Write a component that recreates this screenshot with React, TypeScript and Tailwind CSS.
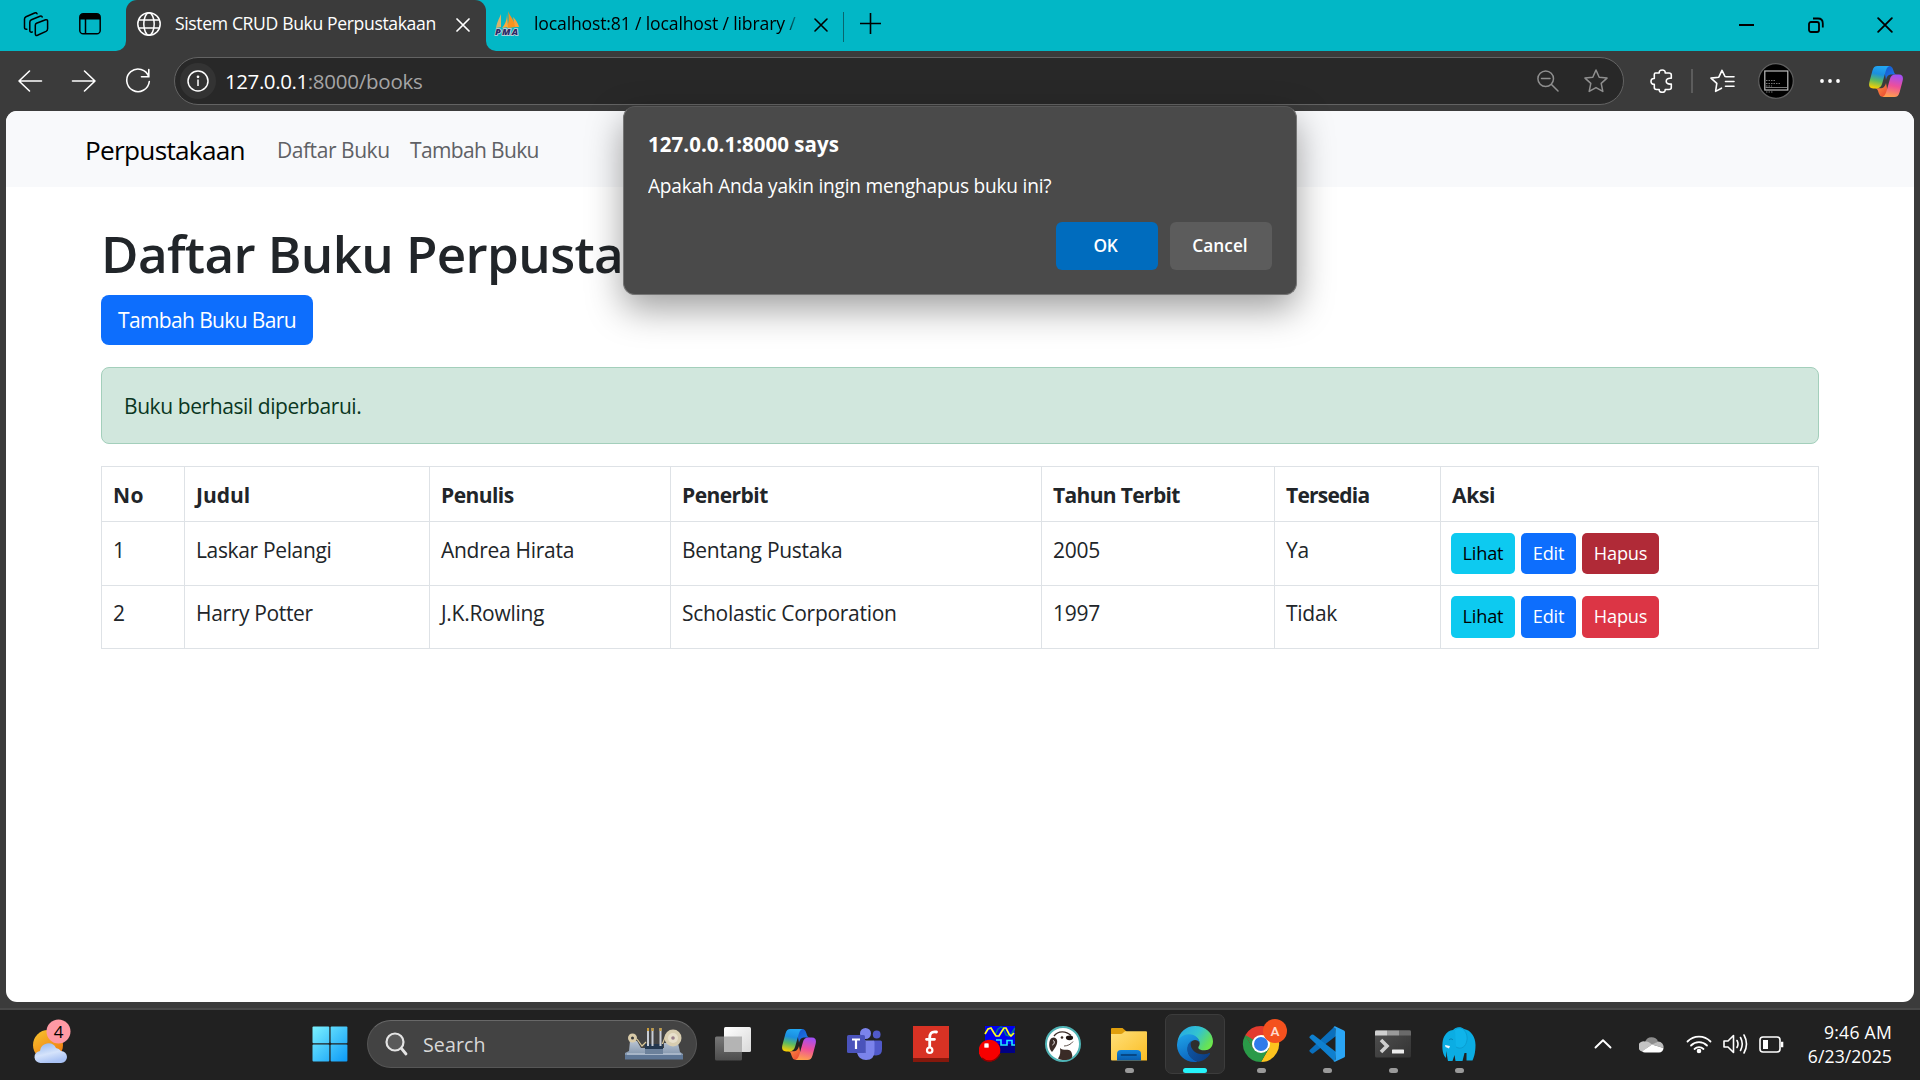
import { useId } from "react";
import type { ReactNode } from "react";

const books = [
  { no: 1, judul: "Laskar Pelangi", penulis: "Andrea Hirata", penerbit: "Bentang Pustaka", tahun: 2005, tersedia: "Ya", active: true },
  { no: 2, judul: "Harry Potter", penulis: "J.K.Rowling", penerbit: "Scholastic Corporation", tahun: 1997, tersedia: "Tidak", active: false },
];

function Cross({ size, stroke, width }: { size: number; stroke: string; width: number }) {
  return (
    <svg width={size} height={size} viewBox="0 0 14 14" fill="none" stroke={stroke} strokeWidth={width} strokeLinecap="round">
      <path d="M1 1 13 13M13 1 1 13" />
    </svg>
  );
}

function Globe() {
  return (
    <svg width="24" height="24" viewBox="0 0 24 24" fill="none" stroke="#fff" strokeWidth="1.5">
      <circle cx="12" cy="12" r="11.2" />
      <ellipse cx="12" cy="12" rx="5.2" ry="11.2" />
      <path d="M2 8h20M2 16h20" />
    </svg>
  );
}

function PhpMyAdmin() {
  return (
    <svg className="overflow-visible" width="26" height="26" viewBox="0 0 26 26">
      <path d="M7 3 7 16 2 17C3 11 5 8 7 3Z" fill="#d9b26a" />
      <path d="M14 0C16 5 20 9 22 16L13 17C15 11 15 6 14 0Z" fill="#f7931e" />
      <path d="M13 2C13 8 12 12 8 17L14 16Z" fill="#fba93c" />
      <path d="M19 6C22 9 24 12 25 16L21 16Z" fill="#f9a23a" />
      <text x="1" y="24.2" fontSize="9.3" fontWeight="800" fontStyle="italic" fontFamily="Open Sans, sans-serif" fill="#2c2a66" stroke="#cfd3dd" strokeWidth="1.6" paintOrder="stroke" textLength="23">PMA</text>
    </svg>
  );
}

function Star() {
  return (
    <svg width="24" height="24" viewBox="0 0 24 24" fill="none" stroke="#8f8f8f" strokeWidth="1.5" strokeLinejoin="round">
      <path d="M12 1 15.2 8.2 23 9.1 17.2 14.4 18.8 22.4 12 18.6 5.2 22.4 6.8 14.4 1 9.1 8.8 8.2Z" />
    </svg>
  );
}

function Copilot({ width, height }: { width: number; height: number }) {
  const id = useId().replace(/[^a-zA-Z0-9]/g, "");
  return (
    <svg width={width} height={height} viewBox="0 0 100 91">
      <defs>
        <linearGradient id={id + "a"} x1="0.5" y1="0" x2="0.3" y2="1">
          <stop offset="0" stopColor="#22a6f2" />
          <stop offset="0.35" stopColor="#1b8fe0" />
          <stop offset="0.65" stopColor="#5cba62" />
          <stop offset="1" stopColor="#fbd000" />
        </linearGradient>
        <linearGradient id={id + "b"} x1="0.6" y1="0" x2="0.4" y2="1">
          <stop offset="0" stopColor="#a24ff5" />
          <stop offset="0.5" stopColor="#ee4f9b" />
          <stop offset="1" stopColor="#ffa04d" />
        </linearGradient>
        <linearGradient id={id + "c"} x1="0" y1="0" x2="1" y2="1">
          <stop offset="0" stopColor="#1555c8" />
          <stop offset="1" stopColor="#1f7df0" />
        </linearGradient>
        <linearGradient id={id + "d"} x1="0" y1="0" x2="1" y2="1">
          <stop offset="0" stopColor="#ff9a45" />
          <stop offset="1" stopColor="#e8402f" />
        </linearGradient>
      </defs>
      <path d="M42 0H58C67 0 69 5 72 13 74 21 76 24 82 25H64C56 25 52 32 50 40Z" fill={`url(#${id}c)`} />
      <path d="M58 91H42C33 91 31 86 28 78 26 69 24 66 18 65H36C44 65 48 58 50 50Z" fill={`url(#${id}d)`} />
      <path d="M25 0H60C53 3 51 9 48 19L39 51C36 61 32 66 22 66H12C0 66-1 57 1 48L10 14C13 4 17 0 25 0Z" fill={`url(#${id}a)`} />
      <path d="M75 91H40C47 88 49 82 52 72L61 40C64 30 68 25 78 25H88C100 25 101 34 99 43L90 77C87 87 83 91 75 91Z" fill={`url(#${id}b)`} />
    </svg>
  );
}

function TabStrip() {
  return (
    <div className="flex h-[51px] bg-[#3b3b3b]">
      <div className="flex w-[126px] items-start gap-[30px] rounded-br-[10px] bg-[#02b7c6] pt-3 pl-[23px]">
        <svg width="26" height="25" viewBox="0 0 26 25" fill="none" stroke="#000" strokeWidth="1.5" strokeLinejoin="round" strokeLinecap="round">
          <path d="M13.5 11.2 22.6 7.8Q24.6 7.3 24.6 9.3V16.8Q24.6 18.6 23 19.4L14.5 23.2Q12.3 24 12.3 21.8V13.2Q12.3 11.7 13.5 11.2Z" />
          <path d="M9.3 20Q6.8 20.6 6.8 18.5V10.2Q6.8 8.5 8.4 7.8L17 4.2Q18.8 3.6 19.2 5" />
          <path d="M3.8 17.2Q1.5 17.6 1.5 15.5V7Q1.5 5.4 3 4.7L11.6 1Q13.4.4 14 1.8" />
        </svg>
        <svg className="mt-px" width="22" height="22" viewBox="0 0 22 22">
          <rect x="0.8" y="0.8" width="20.4" height="20" rx="3.4" fill="none" stroke="#000" strokeWidth="1.5" />
          <path d="M1 6.5V4Q1 1 4 1H18Q21 1 21 4V6.500Z" fill="#000" />
          <path d="M6.500 6V20" stroke="#000" strokeWidth="1.5" />
        </svg>
      </div>
      <div className="w-[360px] bg-[linear-gradient(#02b7c6_50%,#3b3b3b_50%)]">
        <div className="flex h-full items-start rounded-t-[11px] bg-[#3b3b3b] pl-[11px]">
          <div className="mt-3 w-6"><Globe /></div>
          <span className="ml-[14px] w-[270px] pt-[11px] text-[17.6px] leading-[25px] tracking-[-0.37px] whitespace-nowrap text-white">Sistem CRUD Buku Perpustakaan</span>
          <div className="mt-[18px] ml-[11px]"><Cross size={14} stroke="#fff" width={1.7} /></div>
        </div>
      </div>
      <div className="flex flex-1 items-start rounded-bl-[10px] bg-[#02b7c6] pl-[8px]">
        <div className="mt-[11px] w-[26px]"><PhpMyAdmin /></div>
        <span className="ml-[14px] w-[270px] overflow-hidden mask-[linear-gradient(to_right,black_250px,transparent_268px)] pt-[11px] text-[17.6px] leading-[25px] tracking-[-0.15px] whitespace-nowrap text-black">localhost:81 / localhost / library /</span>
        <div className="mt-[18px] ml-[10px]"><Cross size={14} stroke="#000" width={1.6} /></div>
        <div className="mt-[12px] ml-[15px] h-[30px] w-px bg-[#08666e]" />
        <svg className="mt-[13px] ml-[16px]" width="21" height="21" viewBox="0 0 21 21" stroke="#000" strokeWidth="1.6"><path d="M10.500 0V21M0 10.500H21" /></svg>
        <div className="mt-[17px] mr-[27px] ml-auto flex items-center gap-[53.5px]">
          <svg width="15" height="16" viewBox="0 0 15 16"><path d="M0 8H15" stroke="#000" strokeWidth="2" /></svg>
          <svg width="16" height="16" viewBox="0 0 16 16" fill="none" stroke="#000" strokeWidth="1.8">
            <rect x="1" y="5" width="10" height="10" rx="2" />
            <path d="M5 1.500H10Q14.800 1.500 14.800 6.500V10.500" />
          </svg>
          <Cross size={16} stroke="#000" width={1.6} />
        </div>
      </div>
    </div>
  );
}

function Toolbar() {
  return (
    <div className="flex h-[60px] items-center bg-[#3b3b3b] pl-[17px]">
      <div className="flex w-[157px] items-center gap-[28px]">
        <svg className="-mt-px" width="26" height="24" viewBox="0 0 26 24" fill="none" stroke="#fff" strokeWidth="1.6" strokeLinecap="round" strokeLinejoin="round"><path d="M12.500 2 2 12 12.500 22M2 12H24.500" /></svg>
        <svg className="-mt-px" width="26" height="24" viewBox="0 0 26 24" fill="none" stroke="#fff" strokeWidth="1.6" strokeLinecap="round" strokeLinejoin="round"><path d="M13.500 2 24 12 13.500 22M24 12H1.500" /></svg>
        <svg width="26" height="26" viewBox="0 0 26 26" fill="none" stroke="#fff" strokeWidth="1.6" strokeLinecap="round" strokeLinejoin="round"><path d="M23.800 8.800A11.300 11.300 0 1 0 24.300 13.500M23.800 1.500V8.800H16.500" /></svg>
      </div>
      <div className="flex h-12 w-[1450px] items-center rounded-full border-[1.5px] border-[#636363] bg-[#282828] pr-[15px] pl-[5px]">
        <div className="flex size-9 items-center justify-center rounded-full bg-[#333]">
          <svg width="22" height="22" viewBox="0 0 22 22" fill="none" stroke="#fff" strokeWidth="1.5">
            <circle cx="11" cy="11" r="10" />
            <path d="M11 9.500V16" />
            <circle cx="11" cy="6.800" r="0.600" fill="#fff" />
          </svg>
        </div>
        <span className="ml-[9px] text-[20.5px] leading-[28px] tracking-[-0.42px] text-white">127.0.0.1</span>
        <span className="text-[20.5px] leading-[28px] tracking-[-0.25px] text-[#a5a5a5]">:8000/books</span>
        <div className="ml-auto flex items-center gap-[25px]">
          <svg width="22" height="22" viewBox="0 0 22 22" fill="none" stroke="#8f8f8f" strokeWidth="1.5" strokeLinecap="round"><circle cx="8.700" cy="8.700" r="7.800" /><path d="M4.500 8.500H13M14.500 14.500 21 21" /></svg>
          <Star />
        </div>
      </div>
      <div className="flex flex-1 items-center pl-[26px]">
        <svg width="23" height="24" viewBox="0 0 23 24" fill="none" stroke="#fff" strokeWidth="1.6" strokeLinejoin="round">
          <path d="M5.500 4H9.200Q9 1 12.200 1 15.400 1 15.200 4H19Q21.300 4 21.300 6V9.300C17.800 8.800 16.200 10.200 16.200 12.200 16.200 14.200 18 15.500 21.300 15V18.500Q21.300 20.500 19 20.500H15.200Q15.400 23.300 12.200 23.300 9 23.300 9.200 20.500H6.500Q4.300 20.500 4.300 18.500V15.200Q1 15.400 1 12.300 1 9.200 4.300 9.500V5.500Q4.300 4 5.500 4Z" />
        </svg>
        <div className="ml-[18px] h-6 w-[1.500px] bg-[#5c5c5c]" />
        <svg className="ml-[17px]" width="25" height="24" viewBox="0 0 25 24" fill="none" stroke="#fff" strokeWidth="1.6" strokeLinejoin="round" strokeLinecap="round">
          <path d="M16.500 7.700 15 7.500 12 1.300 8.800 8.200 1 9.100 6.800 14.400 5.600 22.400 11.500 19.200M16.500 7.700H24M15.500 12.500H24M15.500 17.200H24" />
        </svg>
        <svg className="ml-[23px]" width="36" height="36" viewBox="0 0 36 36">
          <circle cx="18" cy="18" r="17.300" fill="#000" stroke="#5f5f5f" strokeWidth="1.200" />
          <rect x="6.800" y="8" width="23" height="19" fill="none" stroke="#bdbdbd" strokeWidth="1.200" />
          <path d="M7.500 24.500H29" stroke="#777" strokeWidth="1" />
          <path d="M8 17.500H17M8 20.500H22M8 23H14M8 29H15" stroke="#777" strokeWidth="1" strokeDasharray="1.500 1" />
        </svg>
        <svg className="ml-[26px]" width="20" height="6" viewBox="0 0 20 6" fill="#fff"><circle cx="2" cy="3" r="1.900" /><circle cx="10" cy="3" r="1.900" /><circle cx="18" cy="3" r="1.900" /></svg>
        <div className="ml-[29.500px]"><Copilot width={34} height={31} /></div>
      </div>
    </div>
  );
}

function ActionButton({ children, className }: { children: ReactNode; className: string }) {
  return <button className={"flex items-center justify-center rounded-[5px] pb-[2px] text-[18.200px] tracking-[-0.200px] " + className}>{children}</button>;
}

function Th({ children, className }: { children: ReactNode; className: string }) {
  return <th className={"border border-[#dee2e6] pt-[2px] pl-[11px] text-left text-[21px] font-bold " + className}>{children}</th>;
}

function BookTable() {
  return (
    <table className="mt-[22px] w-[1718px] table-fixed border-collapse text-[21px] leading-8 tracking-[-0.280px] text-[#212529]">
      <thead>
        <tr className="h-[55px]">
          <Th className="w-[83px] tracking-[0.400px]">No</Th>
          <Th className="w-[245px] tracking-normal">Judul</Th>
          <Th className="w-[241px] tracking-[-0.550px]">Penulis</Th>
          <Th className="w-[371px] tracking-[-0.550px]">Penerbit</Th>
          <Th className="w-[233px] tracking-[-0.650px]">Tahun Terbit</Th>
          <Th className="w-[166px] tracking-[-0.750px]">Tersedia</Th>
          <Th className="">Aksi</Th>
        </tr>
      </thead>
      <tbody>
        {books.map((b) => (
          <tr key={b.no} className="h-16 align-top *:border *:border-[#dee2e6] *:pt-[12px] *:pl-[11px] last:h-[63px] last:*:pt-[11px]">
            <td>{b.no}</td>
            <td className="tracking-[-0.350px]">{b.judul}</td>
            <td>{b.penulis}</td>
            <td>{b.penerbit}</td>
            <td>{b.tahun}</td>
            <td>{b.tersedia}</td>
            <td>
              <div className={b.active ? "-mt-px -ml-px flex h-[41px] gap-[6px]" : "-mt-px -ml-px flex h-[42px] gap-[6px]"}>
                <ActionButton className="w-16 bg-[#0dcaf0] text-black">Lihat</ActionButton>
                <ActionButton className="w-[55px] bg-[#0d6efd] text-white">Edit</ActionButton>
                <ActionButton className={b.active ? "w-[77px] bg-[#b02a37] text-white" : "w-[77px] bg-[#dc3545] text-white"}>Hapus</ActionButton>
              </div>
            </td>
          </tr>
        ))}
      </tbody>
    </table>
  );
}

function Page() {
  return (
    <main className="mx-[6px] h-[891px] overflow-hidden rounded-[11px] bg-white">
      <nav className="flex h-[76px] items-center bg-[#f8f9fb] pt-[2px] pl-[79px]">
        <span className="w-[192px] text-[26.200px] leading-10 tracking-[-0.720px] text-black">Perpustakaan</span>
        <span className="w-[133px] text-[21px] leading-8 tracking-[-0.450px] text-[#5f6165]">Daftar Buku</span>
        <span className="text-[21px] leading-8 tracking-[-0.640px] text-[#5f6165]">Tambah Buku</span>
      </nav>
      <div className="pt-[34px] pl-[95px]">
        <h1 className="text-[51.200px] leading-[64px] font-semibold tracking-[-0.630px] text-[#212529]">Daftar Buku Perpustakaan</h1>
        <button className="mt-[10px] flex h-[50px] w-[212px] items-center justify-center rounded-[8px] bg-[#0d6efd] pt-px text-[21px] tracking-[-0.620px] text-white">Tambah Buku Baru</button>
        <div className="mt-[22px] flex h-[77px] w-[1718px] items-center rounded-[8px] border border-[#a3cfbb] bg-[#d1e7dd] pl-[22px] text-[21px] leading-8 tracking-[-0.420px] text-[#0a3622]">Buku berhasil diperbarui.</div>
        <BookTable />
      </div>
    </main>
  );
}

function ConfirmDialog() {
  return (
    <div className="absolute top-[106px] left-[623px] h-[189px] w-[674px] rounded-[12px] border border-[#757575] border-t-[#585858] bg-[#4a4a4a] px-[24px] pt-[21px] text-white shadow-[0_14px_36px_rgba(0,0,0,0.38)]">
      <div className="text-[20.500px] leading-8 font-bold tracking-[0.030px]">127.0.0.1:8000 says</div>
      <div className="mt-[10px] h-[28px] overflow-hidden text-[19.100px] leading-[32px] tracking-[-0.220px]">Apakah Anda yakin ingin menghapus buku ini?</div>
      <div className="mt-[24px] flex justify-end gap-3 text-[17.300px] font-semibold">
        <button className="h-12 w-[102px] rounded-[6px] bg-[#006cbe] pr-[3px] tracking-[-0.400px]">OK</button>
        <button className="h-12 w-[102px] rounded-[6px] bg-[#5c5c5c] pr-[2px]">Cancel</button>
      </div>
    </div>
  );
}

function Weather() {
  return (
    <svg width="40" height="46" viewBox="0 0 40 46">
      <defs>
        <linearGradient id="sun" x1="0" y1="0" x2="0.700" y2="1"><stop offset="0" stopColor="#f7c52f" /><stop offset="1" stopColor="#f0790f" /></linearGradient>
        <linearGradient id="cloud" x1="0" y1="0" x2="0.400" y2="1"><stop offset="0" stopColor="#8fb4ee" /><stop offset="0.600" stopColor="#d5e3fb" /><stop offset="1" stopColor="#a9c2f4" /></linearGradient>
      </defs>
      <circle cx="16" cy="26" r="15" fill="url(#sun)" />
      <path d="M9 44A6 6 0 0 1 8 32 8.500 8.500 0 0 1 24 29 7 7 0 0 1 29 32 6 6 0 0 1 29 44Z" fill="url(#cloud)" />
      <circle cx="26.500" cy="12.500" r="12" fill="#ff99a4" />
      <text x="26.500" y="18.600" fontSize="17" textAnchor="middle" fontFamily="Open Sans, sans-serif" fill="#000">4</text>
    </svg>
  );
}

function StartLogo() {
  return (
    <svg width="36" height="36" viewBox="0 0 36 36">
      <defs><linearGradient id="win" gradientUnits="userSpaceOnUse" x1="0" y1="0" x2="36" y2="36"><stop offset="0" stopColor="#7df3ff" /><stop offset="0.500" stopColor="#43c5fb" /><stop offset="1" stopColor="#0a98f7" /></linearGradient></defs>
      <g fill="url(#win)"><rect x="0.500" y="0.500" width="16.800" height="16.800" rx="1" /><rect x="18.600" y="0.500" width="16.800" height="16.800" rx="1" /><rect x="0.500" y="18.600" width="16.800" height="16.800" rx="1" /><rect x="18.600" y="18.600" width="16.800" height="16.800" rx="1" /></g>
    </svg>
  );
}

function Doodle() {
  return (
    <svg width="60" height="34" viewBox="0 0 60 34">
      <defs><linearGradient id="steel" x1="0" y1="0" x2="0" y2="1"><stop offset="0" stopColor="#b9c4d2" /><stop offset="1" stopColor="#7489a3" /></linearGradient></defs>
      <path d="M6 14 13 14 17 21H40V16H54L56 25 59 27V32H1V26L5 24Z" fill="url(#steel)" />
      <path d="M1 28H59V32.500H1Z" fill="#5f7796" />
      <path d="M3 27H57" stroke="#c7d2df" strokeWidth="1.200" />
      <circle cx="8.500" cy="11" r="4.500" fill="#d9cba9" />
      <circle cx="8.500" cy="11" r="1.500" fill="#3a3a3a" />
      <path d="M13 12 18 19 22 15M38 18 42 8" stroke="#d9c89a" strokeWidth="1.200" fill="none" />
      <circle cx="49" cy="11" r="8.500" fill="#d8cdb0" />
      <circle cx="49" cy="11" r="5" fill="#e8e0cb" />
      <circle cx="49" cy="11" r="1.800" fill="#9a7f8a" />
      <rect x="21" y="17" width="18" height="5" fill="#24384f" />
      <rect x="21" y="22" width="18" height="5" fill="#6c819b" />
      <g fill="#c9ced6"><rect x="23" y="1" width="2" height="18" /><rect x="27.500" y="1" width="2" height="18" /><rect x="35.500" y="1" width="2" height="18" /></g>
      <g fill="#c99d3c"><rect x="23" y="1" width="2" height="3" /><rect x="27.500" y="1" width="2" height="3" /><rect x="35.500" y="1" width="2" height="3" /></g>
    </svg>
  );
}

function TaskView() {
  return (
    <svg width="36" height="36" viewBox="0 0 36 36">
      <defs>
        <linearGradient id="tvf" x1="0" y1="0" x2="1" y2="1"><stop offset="0" stopColor="#fff" /><stop offset="1" stopColor="#d9d9d9" /></linearGradient>
        <linearGradient id="tvb" x1="0" y1="0" x2="0" y2="1"><stop offset="0" stopColor="#777" /><stop offset="1" stopColor="#4c4c4c" /></linearGradient>
      </defs>
      <rect x="0" y="10.500" width="27" height="24" rx="1.500" fill="url(#tvb)" />
      <rect x="9" y="1" width="27" height="25" rx="1.500" fill="url(#tvf)" />
      <path d="M9 10.500H27V26H9Z" fill="#b4b4b4" />
    </svg>
  );
}

function Teams() {
  return (
    <svg width="36" height="36" viewBox="0 0 36 36">
      <circle cx="18.500" cy="7.500" r="5.500" fill="#7b83eb" />
      <circle cx="29.700" cy="8.500" r="3.900" fill="#5059c9" />
      <path d="M26 14.500H33.500Q35 14.500 35 16V23Q35 29.500 29 29.500 26 29.500 25 28Z" fill="#5059c9" />
      <path d="M10 14.500H26Q27.500 14.500 27.500 16V25Q27.500 34 19 34 12 34 10 27Z" fill="#7b83eb" />
      <path d="M11 14.500H19V27H11Z" fill="#5a62c3" />
      <rect x="0" y="9" width="18" height="18" rx="1.600" fill="#4a53bb" />
      <path d="M5 13.500H13M9 13.500V23" stroke="#fff" strokeWidth="2.200" fill="none" />
    </svg>
  );
}

function Fritzing() {
  return (
    <svg width="36" height="36" viewBox="0 0 36 36">
      <path d="M0 0H36V36H0Z" fill="#d83224" />
      <path d="M0 32H36V36H0Z" fill="#85180c" />
      <path d="M23.500 6C18 5 16.700 8 16.700 12V22M13.500 13.300H21.500" stroke="#fff" strokeWidth="2.800" strokeLinecap="round" fill="none" />
      <circle cx="16.700" cy="24.200" r="2.700" fill="#d83224" stroke="#fff" strokeWidth="2.200" />
    </svg>
  );
}

function Scope() {
  return (
    <svg width="36" height="36" viewBox="0 0 36 36" fill="none">
      <path d="M6 0H36V18H6Z" fill="#0000f0" />
      <path d="M18 18H36V27H18Z" fill="#000086" />
      <path d="M16 9 19 3 22 1 24 2 27 9 30 10 33 7 36 2" stroke="#008080" strokeWidth="1.500" />
      <path d="M6 8 9 3 12 2 15 7 17 10 20 10 23 5 25 2 27 2 30 8 32 10 35 7" stroke="#ffff20" strokeWidth="1.700" />
      <path d="M17 14H22V19H28V14.500H33V19H36" stroke="#20e8ff" strokeWidth="1.600" />
      <circle cx="10.500" cy="24.500" r="10.800" fill="#f80000" />
      <path d="M3 32C8 37 17 36 21 28" stroke="#8c0000" strokeWidth="1.500" />
      <rect x="5" y="17" width="5" height="5" rx="1.500" fill="#ffb0b0" />
      <rect x="6" y="18" width="3" height="3" fill="#fff" />
    </svg>
  );
}

function Beaver() {
  return (
    <svg width="36" height="36" viewBox="0 0 36 36">
      <circle cx="18" cy="18" r="17" fill="#fff" stroke="#4fb3b5" strokeWidth="2" />
      <path d="M9 10C13 4.500 21 4.500 26 9.500" stroke="#3a2b26" strokeWidth="1.300" fill="none" />
      <path d="M5 14C7 10.500 11 11 12 14 13 18 10 22 7 26 4 23 3.500 18 5 14Z" fill="#3a2b26" />
      <path d="M8 14.500C10 15 9.500 18 7.500 19" stroke="#fff" strokeWidth="1" fill="none" />
      <path d="M15 22C18 25 24 22.500 26 25.500 27.500 28.500 28 31 26 32.500 22 34.500 17 34.500 13 32.500 15.500 29 15.500 26 15 22Z" fill="#3a2b26" />
      <ellipse cx="24.500" cy="11.800" rx="3.600" ry="2.400" fill="#1e1512" />
      <circle cx="17" cy="11.500" r="1.300" fill="#3a2b26" />
      <path d="M19 20C22 20 26 18.500 28 15.500" stroke="#3a2b26" strokeWidth="0.800" fill="none" />
    </svg>
  );
}

function Folder() {
  return (
    <svg width="36" height="36" viewBox="0 0 36 36">
      <defs>
        <linearGradient id="fold" x1="0" y1="0" x2="1" y2="1"><stop offset="0" stopColor="#ffe07a" /><stop offset="1" stopColor="#fbbd23" /></linearGradient>
        <linearGradient id="foldb" x1="0" y1="0" x2="0" y2="1"><stop offset="0" stopColor="#1184dc" /><stop offset="1" stopColor="#0a5cab" /></linearGradient>
      </defs>
      <path d="M0 3Q0 2 1 2H11.500L15.500 5.500V9H0Z" fill="#e09f0d" />
      <path d="M0 8H9.500Q11 8 12.500 6.500L14 5.200H35Q36 5.200 36 6.200V34.500H1Q0 34.500 0 33.500Z" fill="url(#fold)" />
      <path d="M6 34.500V28Q6 24 10 24H26Q30 24 30 28V34.500Z" fill="url(#foldb)" />
      <path d="M10.500 29H25" stroke="#064785" strokeWidth="1.800" strokeLinecap="round" />
    </svg>
  );
}

function Edge() {
  return (
    <svg width="36" height="36" viewBox="0 0 108 108">
      <defs>
        <linearGradient id="eg1" x1="0" y1="0.200" x2="1" y2="0.700"><stop offset="0" stopColor="#25a8e6" /><stop offset="0.500" stopColor="#33c4cf" /><stop offset="0.850" stopColor="#5fdd65" /><stop offset="1" stopColor="#6ee84a" /></linearGradient>
        <linearGradient id="eg2" x1="0.300" y1="0" x2="0.600" y2="1"><stop offset="0" stopColor="#1ea0e6" /><stop offset="1" stopColor="#0a62bd" /></linearGradient>
        <linearGradient id="eg3" x1="0" y1="0.300" x2="1" y2="0.800"><stop offset="0" stopColor="#0f56a4" /><stop offset="1" stopColor="#0b3c80" /></linearGradient>
      </defs>
      <path d="M1 48C6 18 28 0 54 0 86 0 108 22 108 46 108 64 96 73 84 73 72 73 64 69 64 65 64 62 68 60 68 52 68 40 56 30 40 28 22 26 8 36 1 48Z" fill="url(#eg1)" />
      <path d="M0 56C1 38 16 25 36 25 56 25 68 39 68 52 66 44 60 42 54 42 44 42 32 54 32 70 32 88 44 100 62 107 28 113-1 88 0 56Z" fill="url(#eg2)" />
      <path d="M42 45C33 52 30 62 31 72 33 90 46 104 64 107 80 105 92 95 99 84 100 81 98 80 96 81 90 84 84 85 77 85 56 85 41 70 41 55 41 51 42 48 45 44Z" fill="url(#eg3)" />
    </svg>
  );
}

function Chrome() {
  return (
    <svg className="overflow-visible" width="36" height="36" viewBox="0 0 36 36">
      <path d="M18 18 2.400 9A18 18 0 0 1 33.600 9Z" fill="#e33b2e" />
      <path d="M18 9H33.600A18 18 0 0 1 18 36L25.800 22.500Z" fill="#fcc31e" />
      <path d="M2.400 9 10.200 22.500 18 27 25.800 22.500 18 36A18 18 0 0 1 2.400 9Z" fill="#2a9a48" />
      <path d="M2.400 9 10.200 22.500 18 9Z" fill="#e33b2e" />
      <path d="M2.400 9 10.200 22.500 14 16Z" fill="#2a9a48" />
      <circle cx="18" cy="18" r="9" fill="#fff" />
      <circle cx="18" cy="18" r="7" fill="#2f7bea" />
      <circle cx="32" cy="5" r="12" fill="#f4511e" />
      <text x="32" y="10" fontSize="13.500" fontWeight="600" textAnchor="middle" fontFamily="Roboto, sans-serif" fill="#ffd9cc">A</text>
    </svg>
  );
}

function VsCode() {
  return (
    <svg width="36" height="36" viewBox="0 0 36 36">
      <path d="M26 0.500 27 10 4.500 27.300Q3.500 28 2.500 27.200L0.700 25.500Q0 24.700 0.700 24L24.500 1.500Z" fill="#0a6fbd" />
      <path d="M26 35.500 27 26 4.500 8.800Q3.500 8 2.500 8.800L0.700 10.500Q0 11.300 0.700 12L24.500 34.500Z" fill="#0f80cf" />
      <path d="M26 0.200 35 4.500Q36 5 36 6V30Q36 31 35 31.500L26 35.800Q24.500 35.800 24.500 34.500 26.500 35 26.500 33V3Q26.500 1 24.500 1.500 25 0.200 26 0.200Z" fill="#2aa5f5" />
    </svg>
  );
}

function Terminal() {
  return (
    <svg width="36" height="28" viewBox="0 0 36 28">
      <defs><linearGradient id="term" x1="0" y1="0" x2="1" y2="1"><stop offset="0" stopColor="#505050" /><stop offset="1" stopColor="#333" /></linearGradient></defs>
      <rect width="36" height="27.500" rx="1.500" fill="url(#term)" />
      <path d="M0 1.500Q0 .5 1.500.5H12V5.500H0Z" fill="#cfcfcf" />
      <path d="M12 .5H24V5.500H12Z" fill="#9a9a9a" />
      <path d="M24 .5H34.500Q36 .5 36 1.500V5.500H24Z" fill="#6a6a6a" />
      <path d="M6 10 12 16 6 22" fill="none" stroke="#cfcfcf" strokeWidth="3.600" />
      <rect x="17" y="19.500" width="12" height="4" rx="0.600" fill="#ededed" />
    </svg>
  );
}

function Elephant() {
  return (
    <svg width="36" height="36" viewBox="0 0 36 36">
      <path d="M12 4C14 1 20 0 23 3 30 4 34.500 11 34.500 19 34.500 27 33 31 31.500 34.500H25.500V27H23.500L21.500 35H14.500L13.500 29 11.500 35H7C6 31 6 28 5.500 25L5 32C2 29 1 24 1.500 17 2 11 5 5 12 4Z" fill="#0bade3" />
      <path d="M14 3.500C20-1 27 5 26 14 25 21 20 24 15 21" fill="#0fb4ea" stroke="#0a98cb" strokeWidth="0.800" />
      <path d="M8 14C9 12.500 11 12.500 12 14" stroke="#0883b3" strokeWidth="1" fill="none" />
      <path d="M4 19 9 20 8 22.500 4.500 21Z" fill="#eef7fb" />
    </svg>
  );
}

const apps: { icon: ReactNode; running?: boolean; focused?: boolean }[] = [
  { icon: <TaskView /> },
  { icon: <Copilot width={34} height={31} /> },
  { icon: <Teams /> },
  { icon: <Fritzing /> },
  { icon: <Scope /> },
  { icon: <Beaver /> },
  { icon: <Folder />, running: true },
  { icon: <Edge />, running: true, focused: true },
  { icon: <Chrome />, running: true },
  { icon: <VsCode />, running: true },
  { icon: <Terminal />, running: true },
  { icon: <Elephant />, running: true },
];

function Tray() {
  return (
    <div className="mr-[28px] ml-auto flex items-center">
      <svg width="18" height="12" viewBox="0 0 18 12" fill="none" stroke="#fff" strokeWidth="1.900" strokeLinecap="round" strokeLinejoin="round"><path d="M1.500 9.500 9 2.200 16.500 9.500" /></svg>
      <svg className="ml-[27px]" width="25" height="17" viewBox="0 0 25 17">
        <path d="M6 6A7 7 0 0 1 19 5.500L12.500 10Z" fill="#8d8d8d" />
        <path d="M6 5.500C9 5 11 6.500 13 8.500L3 15.500A5.200 5.200 0 0 1 6 5.500Z" fill="#c4c4c4" />
        <path d="M19 5.500A5.500 5.500 0 0 1 24.500 12L13 8.500Z" fill="#bcbcbc" />
        <path d="M3 15.200 13 8.500 24.500 12A4.500 4.500 0 0 1 20 16.500H6A5 5 0 0 1 3 15.200Z" fill="#fff" />
      </svg>
      <svg className="ml-[22px]" width="26" height="19" viewBox="0 0 26 19" fill="none" stroke="#fff" strokeWidth="1.800" strokeLinecap="round">
        <path d="M1.500 6.500A16 16 0 0 1 24.500 6.500M5 10.500A11.200 11.200 0 0 1 21 10.500M8.500 14A6.500 6.500 0 0 1 17.500 14" />
        <circle cx="13" cy="16" r="1.400" fill="#fff" />
      </svg>
      <svg className="ml-[11px]" width="25" height="20" viewBox="0 0 25 20" fill="none" stroke="#fff" strokeWidth="1.600" strokeLinecap="round" strokeLinejoin="round">
        <path d="M1 7H5L10.500 1.500V18.500L5 13H1ZM14 6.500Q16 10 14 13.500M17.500 3.500Q21 10 17.500 16.500M21 1Q26 10 21 19" />
      </svg>
      <svg className="ml-[11px]" width="25" height="17" viewBox="0 0 25 17" fill="none" stroke="#fff" strokeWidth="1.600">
        <rect x="1" y="1" width="20" height="15" rx="3" />
        <rect x="4" y="4" width="5" height="9" fill="#fff" stroke="none" />
        <path d="M22 6.500H23.500V10.500H22" fill="#fff" />
      </svg>
      <div className="ml-[22px] flex w-[86px] flex-col items-end text-[17.600px] leading-6 whitespace-nowrap text-white">
        <span className="tracking-[0.250px]">9:46 AM</span>
        <span className="tracking-[0.100px]">6/23/2025</span>
      </div>
    </div>
  );
}

function Taskbar() {
  return (
    <footer className="flex h-[72px] items-center border-t-2 border-[#474747] bg-[#212121] pb-[2px]">
      <div className="-mt-[4px] w-[312px] pl-8"><Weather /></div>
      <StartLogo />
      <div className="ml-[19px] flex h-12 w-[330px] items-center rounded-full border border-[#565656] border-t-[#686868] bg-[#434343] pl-[17px]">
        <svg width="23" height="24" viewBox="0 0 23 24" fill="none" stroke="#e4e4e4" strokeLinecap="round"><circle cx="10" cy="10" r="8.500" strokeWidth="2.200" fill="#5a5a5a" /><path d="M16.500 16.500 21 22" strokeWidth="2.800" /></svg>
        <span className="ml-[15px] pt-px text-[19.600px] tracking-[0.100px] text-[#d8d8d8]">Search</span>
        <div className="mr-[12px] ml-auto"><Doodle /></div>
      </div>
      <div className="ml-[6px] flex gap-[6px]">
        {apps.map((a, i) => (
          <div key={i} className={"flex h-[60px] w-[60px] flex-col items-center justify-between rounded-[7px] border pt-[11px] " + (a.focused ? "border-[#3c3c3c] bg-[#2e2e2e]" : "border-transparent")}>
            <div className="flex h-9 items-center">{a.icon}</div>
            {a.running && <div className={a.focused ? "h-[5px] w-6 rounded-full bg-[#26f3fa]" : "h-[5px] w-[9px] rounded-full bg-[#9a9a9a]"} />}
          </div>
        ))}
      </div>
      <Tray />
    </footer>
  );
}

export default function App() {
  return (
    <div className="relative flex h-[1080px] w-[1920px] flex-col overflow-hidden bg-[#3b3b3b] font-['Open_Sans',sans-serif]">
      <TabStrip />
      <Toolbar />
      <Page />
      <div className="h-[6px]" />
      <Taskbar />
      <ConfirmDialog />
    </div>
  );
}
